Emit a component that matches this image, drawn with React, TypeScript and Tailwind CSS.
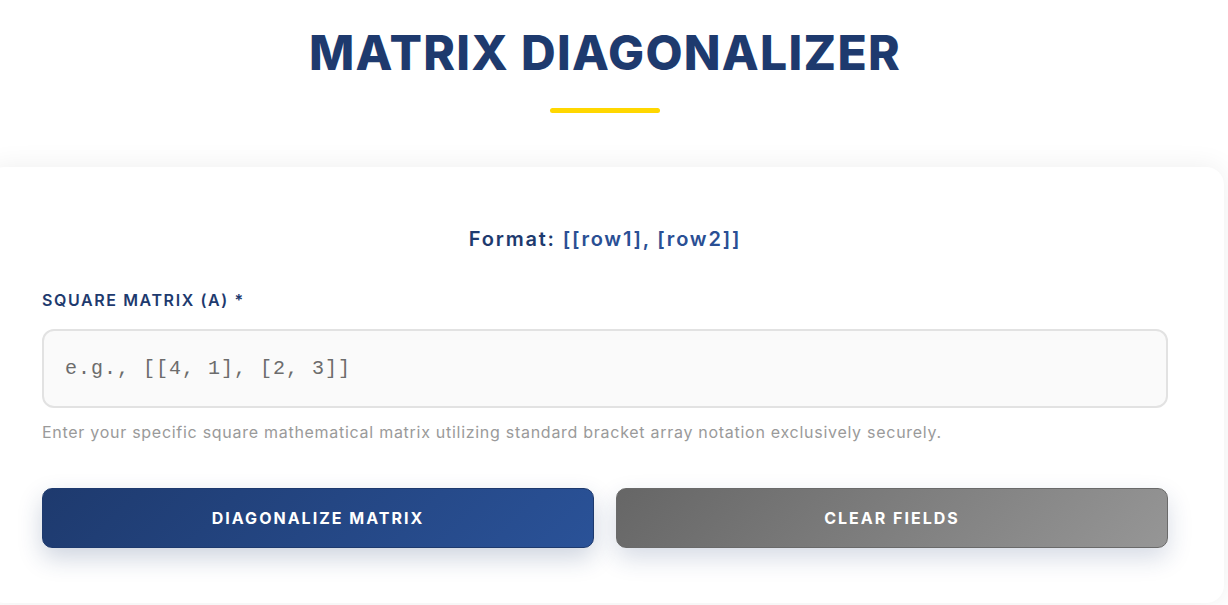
import React from "react";

const sans = "font-['Inter','Noto_Sans','Liberation_Sans',sans-serif]";

export default function App() {
  return (
    <div className={`min-h-[605px] bg-white overflow-hidden ${sans}`}>
      <div className="w-[1238px] ml-[-14px]">
        <header className="flex flex-col items-center pt-[29px]">
          <h1 className="text-[48px] leading-none font-extrabold tracking-[1.3px] text-[#1e3a6e]">
            MATRIX DIAGONALIZER
          </h1>
          <div className="mt-[31px] h-[5px] w-[110px] rounded-full bg-[#ffd700]" />
        </header>

        <section className="mt-[54px] rounded-[18px] bg-white px-[56px] pt-[58px] pb-[55px] shadow-[0_0_28px_rgba(0,0,0,0.07)]">
          <p className="text-center text-[20px] leading-[28px] font-semibold tracking-[1.8px] text-[#1e3a6e]">
            Format: <span className="text-[#2a4f94]">[[row1], [row2]]</span>
          </p>

          <label className="mt-[37px] block text-[16px] leading-[20px] font-semibold tracking-[1.6px] text-[#1e3a6e]">
            SQUARE MATRIX (A) *
          </label>
          <input
            type="text"
            placeholder="e.g., [[4, 1], [2, 3]]"
            className="mt-[19px] block h-[79px] w-full rounded-[12px] border-2 border-[#e2e2e2] bg-[#fafafa] px-[21px] font-['Liberation_Mono','Courier_New',monospace] text-[20px] tracking-[1px] text-[#333] outline-none placeholder:text-[#6c6c6c]"
          />
          <p className="mt-[14px] text-[16px] leading-[20px] tracking-[0.72px] text-[#9a9a9a]">
            Enter your specific square mathematical matrix utilizing standard bracket array notation exclusively securely.
          </p>

          <div className="mt-[46px] grid grid-cols-2 gap-[22px]">
            <button className="h-[60px] rounded-[10px] border border-[#1e3a6e] bg-[linear-gradient(135deg,#1e3a6e_0%,#2a5298_100%)] text-[16px] font-bold tracking-[2px] text-white shadow-[0_10px_25px_rgba(30,58,110,0.22)]">
              DIAGONALIZE MATRIX
            </button>
            <button className="h-[60px] rounded-[10px] border border-[#6a6a6a] bg-[linear-gradient(135deg,#666666_0%,#969696_100%)] text-[16px] font-bold tracking-[2px] text-white shadow-[0_10px_25px_rgba(30,58,110,0.18)]">
              CLEAR FIELDS
            </button>
          </div>
        </section>
      </div>
    </div>
  );
}
